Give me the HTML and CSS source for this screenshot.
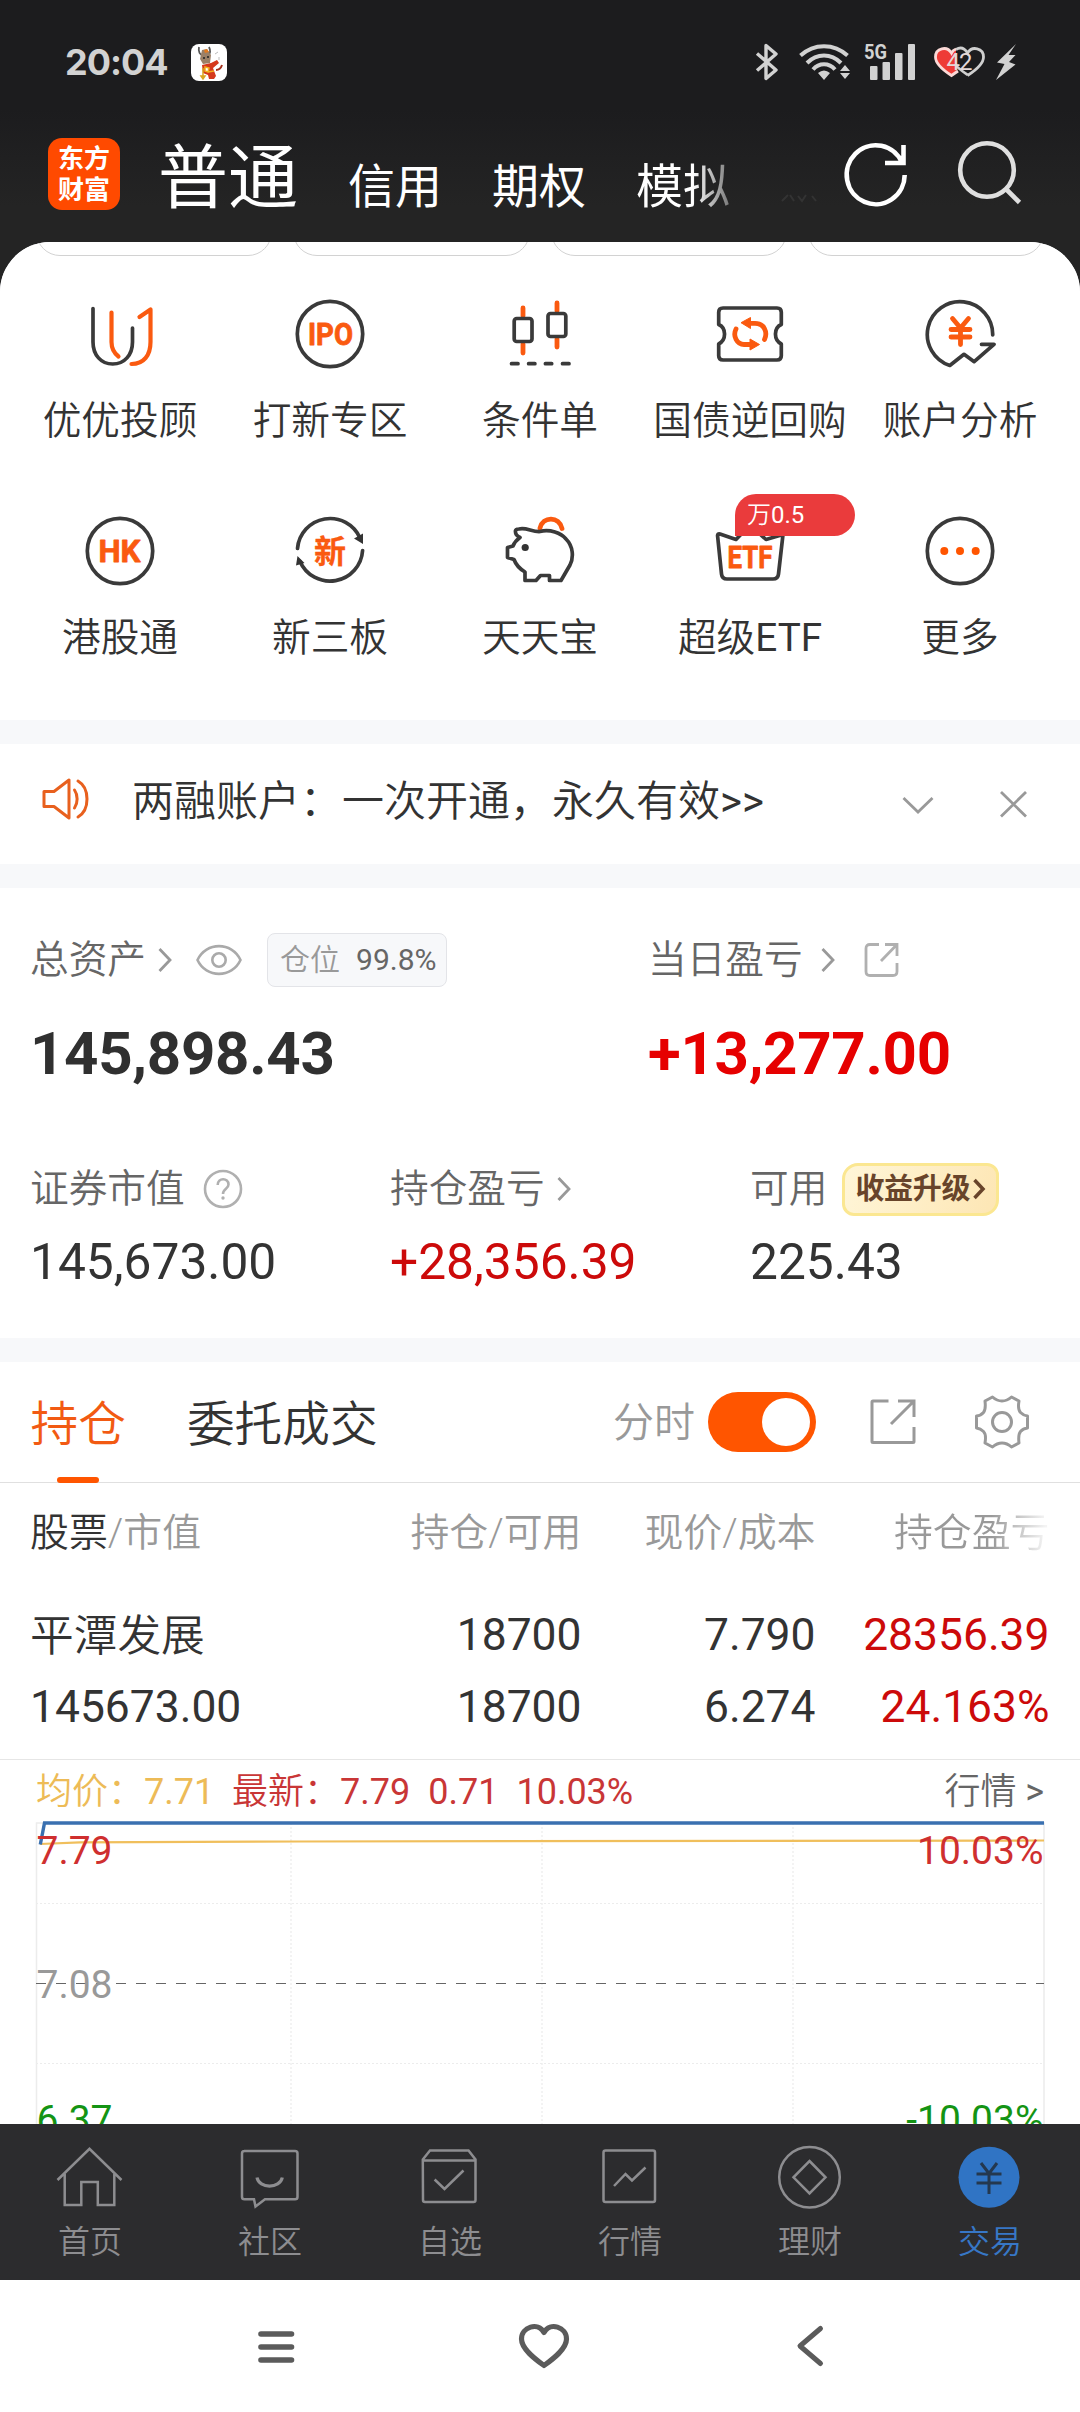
FILE: index.html
```html
<!DOCTYPE html>
<html lang="zh-CN">
<head>
<meta charset="utf-8">
<title>东方财富 - 交易</title>
<link rel="stylesheet" href="styles.css">
</head>
<body>
<div class="screen">
  <header class="top">
    <div class="status">
      <span class="clock">20:04</span>
      <svg class="app-dot" viewBox="0 0 36 37" width="36" height="37">
        <rect width="36" height="37" rx="8" fill="#fff"/>
        <path d="M8 3C7 8 9 11 12 11M18 3c2 4 1 7-1 9" stroke="#555" stroke-width="1.8" fill="none"/>
        <path d="M11 6l5-1 4 6-1 8-7 1-3-5z" fill="#9b8067"/>
        <path d="M13 6l3-1 2 3-4 1z" fill="#e37a1f"/>
        <path d="M12 14h2M16 13h2" stroke="#222" stroke-width="1.5"/>
        <path d="M11 21l9-2 6-3 2 3-6 5 3 8-2 3h-5l-1-4-5-2z" fill="#d5391c"/>
        <path d="M14 23l4 1-1 4-3-1zM17 28l6-1" fill="#fff" stroke="#f2b01e" stroke-width="1.5"/>
        <path d="M12 24v9M10 32l2 3 2-3z" stroke="#d9a520" fill="#d9a520" stroke-width="1.5"/>
        <path d="M25 26c3 0 5-2 6-5" stroke="#a5301b" stroke-width="2" fill="none"/>
        <path d="M24 10l3-2M28 13v3" stroke="#bbb" stroke-width="1"/>
      </svg>
      <div class="tray">
        <svg viewBox="755 43 24 38" width="24" height="38"><path d="M757 53.5L776 70 766 78.5V45.500L776 54 757 70.500" fill="none" stroke="#d2d2d2" stroke-width="3.4" stroke-linejoin="round"/></svg>
        <svg class="wifi" viewBox="798 42 54 40" width="54" height="40">
          <g fill="none" stroke="#d2d2d2" stroke-width="4"><path d="M800.500 55.500C814 43 834 43 847.500 55.500"/><path d="M807 63C817 53 831 53 841 63"/><path d="M813 69.500C819 62.500 829 62.500 835 69.500"/></g>
          <path d="M818 73q6-5 12 0l-6 7zM845 65l5 6h-10zM845 79l5-6h-10z" fill="#d2d2d2"/>
        </svg>
        <svg class="signal" viewBox="863 36 54 52" width="54" height="52"><g fill="#d2d2d2"><rect x="870" y="66" width="7.500" height="14" rx="1"/><rect x="882.500" y="62" width="7.500" height="18" rx="1"/><rect x="895" y="53" width="7.500" height="27" rx="1"/><rect x="908" y="44" width="7" height="36" rx="1"/><text x="864" y="58.500" class="net" textLength="23" lengthAdjust="spacingAndGlyphs">5G</text></g></svg>
        <svg class="hearts" viewBox="933 44 54 36" width="54" height="36">
          <path d="M951.500 75.500C946 72 935.500 65 935.500 57 935.500 48 947 45.500 951.500 53Q953 50 956 49V73z" fill="#ee3b36"/>
          <path d="M968 75C962 71 957 68 955 64" fill="none" stroke="#cfcfcf" stroke-width="2.600"/>
          <path d="M956 49.500C961 46.500 965 49 967.500 53 972 45.500 983.500 48 983.500 57 983.500 65 973 72 967.500 75.500" fill="none" stroke="#cfcfcf" stroke-width="2.800"/>
          <path d="M958 71l-6.500 4.500C946 72 935.500 65 935.500 57 935.500 48 947 45.500 951.500 53Q953 50 956 49" fill="none" stroke="#fbd9d7" stroke-width="2.800"/>
          <text x="946.500" y="70" class="battery">42</text>
        </svg>
        <svg class="bolt" viewBox="995 44 22 38" width="22" height="38"><path d="M1016 45L997 63.500 1004.500 65 996 81 1015.500 65.500 1009 63 1015.500 56 1008.500 56z" fill="#d2d2d2"/></svg>
      </div>
    </div>
    <nav class="accounts">
      <div class="logo">东方<br>财富</div>
      <div class="kinds">
        <span class="kind kind-on">普通</span>
        <span class="kind">信用</span>
        <span class="kind">期权</span>
        <span class="kind kind-fade">模拟</span>
        <svg class="ghost" viewBox="0 0 38 10" width="38" height="10"><path d="M1 8l6-6M9 2l4 6M17 3l4 5 4-6M31 3l4 5" stroke="#333" stroke-width="2" fill="none"/></svg>
      </div>
      <svg class="refresh" viewBox="842 141 68 68" width="68" height="68"><path d="M904.700 176A29 29.500 0 1 1 902.500 164.500M903.500 146V164H885" fill="none" stroke="#fff" stroke-width="4.600"/></svg>
      <svg class="search" viewBox="955 139 68 68" width="68" height="68"><g fill="none" stroke="#dfdfdf" stroke-width="4.600"><circle cx="987" cy="171" r="26.800"/><path d="M1006 190l13.500 13.500"/></g></svg>
    </nav>
  </header>

  <main class="sheet">
    <section class="menu">
      <div class="pills"><i></i><i></i><i></i><i></i></div>
      <div class="grid">
        <a class="tool"><svg class="ico" viewBox="0 0 72 72"><path class="dk" d="M9 10.500V44C9 57 17 66 28.700 66S48.500 57 48.500 44V30"/><path class="or" d="M27.500 14.500V44C27.500 51 30 55 34.500 58.500M55.500 19L66.500 11.500V44C66.500 57 60 66 47.500 66"/></svg><b>优优投顾</b></a>
        <a class="tool"><svg class="ico" viewBox="0 0 72 72"><circle class="dk" cx="36" cy="36" r="32.700"/><text class="ot" x="14" y="47" textLength="45" lengthAdjust="spacingAndGlyphs">IPO</text></svg><b>打新专区</b></a>
        <a class="tool"><svg class="ico" viewBox="0 0 72 72"><path class="or thick" d="M19 10V18M19 46V55M53 5V13M53 41V49"/><rect class="dk" x="10.200" y="20.500" width="17.800" height="23" rx="2.500"/><rect class="dk" x="44" y="15.500" width="17.800" height="23" rx="2.500"/><path class="dk" d="M7.500 65.700h6.500M24.600 65.700h6.300M41.400 65.700h6.300M58.500 65.700h6.500"/></svg><b>条件单</b></a>
        <a class="tool"><svg class="ico" viewBox="0 0 72 72"><path class="dk" d="M9 10H63Q67.300 10 67.300 14.300V26.500C59.500 30 59.500 42 67.300 46V57.700Q67.300 62 63 62H9Q4.700 62 4.700 57.700V46C12.500 42 12.500 30 4.700 26.500V14.300Q4.700 10 9 10Z"/><path class="or thick" d="M35 25.300H41C50 25.300 54 34 50.500 41.500M22 31C18.500 38 23 46.500 30 46.500H37"/><path class="of" d="M27 24.700L36.500 19.500V30.500ZM45.500 46.500L36 41V52Z"/></svg><b>国债逆回购</b></a>
        <a class="tool"><svg class="ico" viewBox="0 0 72 72"><path class="dk" d="M68.700 37A32.700 32.700 0 1 0 25.800 67.500L40 56.300 50.200 63.700 70 46.300H57.500"/><path class="or thick" d="M28.500 20.500L36.500 30 44.500 20.500M27 31.500H46M27 39H46M36.500 30V46.500"/></svg><b>账户分析</b></a>
        <a class="tool"><svg class="ico" viewBox="0 0 72 72"><circle class="dk" cx="36" cy="36" r="32.700"/><text class="ot" x="14.500" y="47" textLength="42" lengthAdjust="spacingAndGlyphs">HK</text></svg><b>港股通</b></a>
        <a class="tool"><svg class="ico" viewBox="0 0 72 72"><path class="dk" d="M3.500 33.500A32.700 32.700 0 0 1 66 23M68.600 35.500A32.700 32.700 0 0 1 6 46.500"/><path d="M60 23.500L69 18.500V29ZM3.500 41L2 50.500 10.500 48Z" fill="#333"/><text class="ot cn" x="20" y="48">新</text></svg><b>新三板</b></a>
        <a class="tool"><svg class="ico" viewBox="0 0 72 72"><path class="or thick" d="M36 13C39 1 55 1 58 13.500"/><path class="dk" d="M11.500 16Q11.500 14 15 14C22 12 28 17 36 16.500 46 14 57 18 62 24 69 31 70 42 66 50L57 65.500H45.500V60.500H36.500L32 65.500H21V57C16 54 12 50 10 44.500L3.500 42.500V32.500L9 31Q11 26 16 22.500Q11 20 11.500 16Z"/><circle cx="21.200" cy="32.500" r="3.600" fill="#333"/></svg><b>天天宝</b></a>
        <a class="tool"><svg class="ico" viewBox="0 0 72 72"><path class="dk" d="M22 24.500L6 19Q3.300 18.500 3.600 21L7.500 59Q8 64 13 64H59Q64 64 64.500 59L69 19.500 52 24.500 36 10Z"/><text class="ot" x="13.500" y="53" textLength="45" lengthAdjust="spacingAndGlyphs">ETF</text></svg><b>超级<i>ETF</i></b><em class="tag">万<i>0.5</i></em></a>
        <a class="tool"><svg class="ico" viewBox="0 0 72 72"><circle class="dk" cx="36" cy="36" r="32.700"/><g fill="#ff5500"><circle cx="20.300" cy="36" r="4"/><circle cx="36" cy="36" r="4"/><circle cx="51.700" cy="36" r="4"/></g></svg><b>更多</b></a>
      </div>
    </section>

    <section class="notice">
      <svg viewBox="41 777 50 44" width="50" height="44"><g fill="none" stroke="#e8601e" stroke-width="3" stroke-linejoin="round" stroke-linecap="round"><path d="M44 791.500H54L69 780V818L54 806.500H44ZM74.500 790C78 795 78 803 74.500 808M78 781C90 788 90 810 78 817"/></g></svg>
      <p>两融账户：一次开通，永久有效<i>&gt;&gt;</i></p>
      <svg viewBox="900 790 36 26" width="36" height="26"><path d="M903.500 797L918 811 932.500 797" class="gl"/></svg>
      <svg class="close" viewBox="998 788 31 32" width="31" height="32"><path d="M1001 792L1026 816.500M1026 792L1001 816.500" class="gl"/></svg>
    </section>

    <section class="assets">
      <div class="duo">
        <div class="cell">
          <div class="lab">总资产<svg class="chev" viewBox="0 0 16 26" width="16" height="26"><path d="M2.500 2L13 13 2.500 24" class="gl"/></svg>
            <svg class="eye" viewBox="0 0 46 32" width="46" height="32"><g fill="none" stroke="#aaa" stroke-width="2.600"><path d="M1.500 16C10-2.500 36-2.500 44.500 16 36 34.500 10 34.500 1.500 16Z"/><circle cx="23" cy="16" r="6.700"/></g></svg>
            <span class="ratio">仓位<i>99.8%</i></span></div>
          <div class="big">145,898.43</div>
        </div>
        <div class="cell">
          <div class="lab">当日盈亏<svg class="chev wide" viewBox="0 0 16 26" width="16" height="26"><path d="M2.500 2L13 13 2.500 24" class="gl"/></svg>
            <svg class="share" viewBox="0 0 36 36" width="36" height="36"><path d="M15 2.500H6Q2 2.500 2 6.500V29.500Q2 33.500 6 33.500H29Q33 33.500 33 29.500V21M21 2.500H33V14M32 3.500L17 19" fill="none" stroke="#b0b0b0" stroke-width="2.800"/></svg></div>
          <div class="big up">+13,277.00</div>
        </div>
      </div>
      <div class="trio">
        <div class="cell"><div class="lab">证券市值<svg class="help" viewBox="0 0 40 40" width="40" height="40"><circle cx="20" cy="20" r="18" fill="none" stroke="#b0b0b0" stroke-width="2.600"/><path d="M14.700 16C14.700 8.500 25.500 8.500 25.500 15.500 25.500 20 20 19.500 20 25" fill="none" stroke="#b0b0b0" stroke-width="2.600"/><circle cx="20" cy="29" r="1.700" fill="#b0b0b0"/></svg></div><div class="mid">145,673.00</div></div>
        <div class="cell"><div class="lab">持仓盈亏<svg class="chev" viewBox="0 0 16 26" width="16" height="26"><path d="M2.500 2L13 13 2.500 24" class="gl"/></svg></div><div class="mid up2">+28,356.39</div></div>
        <div class="cell"><div class="lab">可用<span class="gold">收益升级<svg viewBox="0 0 14 22" width="14" height="22"><path d="M2.500 2L11 11 2.500 20" fill="none" stroke="#68442a" stroke-width="3.500"/></svg></span></div><div class="mid">225.43</div></div>
      </div>
    </section>

    <section class="positions">
      <div class="tabs">
        <span class="tab on">持仓</span>
        <span class="tab">委托成交</span>
        <span class="switch-lab">分时</span>
        <span class="switch"><i></i></span>
        <svg class="export" viewBox="0 0 48 48" width="48" height="48"><path d="M19.500 3H4Q3 3 3 4V43.500Q3 44.500 4 44.500H44Q45 44.500 45 43.500V29M29 3H45V19M44.500 3.500L22 26" fill="none" stroke="#999" stroke-width="3"/></svg>
        <svg class="gear" viewBox="-28 -28 56 56" width="56" height="56"><g fill="none" stroke="#999" stroke-width="3"><circle r="9.500"/><path stroke-linejoin="round" d="M-9.500-25Q-5-21 0-21T9.500-25L17-21Q15.500-12.500 18.500-9.500T25.500-6V6Q21 6.500 18.500 9.500T17 21L9.500 25Q5 21 0 21T-9.500 25L-17 21Q-15.500 12.500-18.500 9.500T-25.500 6V-6Q-21-6.500-18.500-9.500T-17-21Z"/></g></svg>
      </div>
      <div class="row head"><span><i>股票</i>/市值</span><span>持仓/可用</span><span>现价/成本</span><span class="cut">持仓盈亏</span></div>
      <div class="row first"><span class="name">平潭发展</span><span>18700</span><span>7.790</span><span class="up2">28356.39</span></div>
      <div class="row"><span>145673.00</span><span>18700</span><span>6.274</span><span class="up2">24.163%</span></div>
      <div class="quote">
        <div class="legend"><span class="avg">均价：<i>7.71</i></span><span class="last">最新：<i>7.79</i></span><span class="last"><i>0.71</i></span><span class="last"><i>10.03%</i></span><span class="more">行情 <i>&gt;</i></span></div>
        <svg class="chart" viewBox="0 1816 1080 308" width="1080" height="308">
          <g fill="none" stroke="#ececec" stroke-width="1.500"><path d="M36.500 2124V1823H1044V2124"/><g stroke-dasharray="2 2" stroke-width="1.200"><path d="M36 1903.500H1044M36 2063.500H1044M291 1823V2124M542 1823V2124M793 1823V2124"/></g></g>
          <path d="M36 1983.500H1044" stroke="#666" stroke-width="1" stroke-dasharray="10 10"/>
          <path d="M40 1844L80 1842.300 300 1841.500 1044 1840.500" fill="none" stroke="#f0bf5c" stroke-width="2.200"/>
          <path d="M40.300 1844.500L44.500 1823H1044" fill="none" stroke="#3a70b0" stroke-width="3.400"/>
          <g class="axis">
            <text x="36.500" y="1864.300" fill="#cf2f2f">7.79</text><text x="36.500" y="1998" fill="#999">7.08</text><text x="36.500" y="2132.500" fill="#149414">6.37</text>
            <g text-anchor="end"><text x="1043.500" y="1864.300" fill="#cf2f2f">10.03%</text><text x="1043.500" y="2132.500" fill="#149414">-10.03%</text></g>
          </g>
        </svg>
      </div>
    </section>
  </main>

  <nav class="bottom">
    <a><svg viewBox="0 0 72 72"><path d="M3.500 39L35.500 7.800 67.500 39M10.700 33V64H27.300V41H43.800V64H60.300V33"/></svg>首页</a>
    <a><svg viewBox="0 0 72 72"><path d="M10 10H61Q63.500 10 63.500 12.500V56Q63.500 58.300 61 58.300H31L21.500 65.500 20 58.300H10.500Q8 58.300 8 56V12.500Q8 10 10.500 10Z"/><path stroke-width="3.200" d="M23 36.500C25 48 46 48 48.300 36.500"/></svg>社区</a>
    <a><svg viewBox="0 0 72 72"><path d="M8.800 18.500L16 9.500H54.500L61.500 18.500V59Q61.500 61 59.500 61H11Q9 61 9 59ZM9 19.500H61.500M20.600 38.500L30.500 48 49.500 29.500"/></svg>自选</a>
    <a><svg viewBox="0 0 72 72"><path d="M11.500 9.500H59Q61 9.500 61 11.500V59Q61 61 59 61H11.500Q9.500 61 9.500 59V11.500Q9.500 9.500 11.500 9.500ZM20 45L31.500 33 38 39.500 51.500 26.500"/></svg>行情</a>
    <a><svg viewBox="0 0 72 72"><circle cx="35.500" cy="36.300" r="30.300"/><path d="M35.500 20L51.500 36.300 35.500 52.500 19.500 36.300Z"/></svg>理财</a>
    <a class="now"><svg viewBox="0 0 72 72"><circle cx="35" cy="36.300" r="30.500" fill="#3074c4" stroke="none"/><path class="yen" d="M27 22L35 32.500 43 22M22.500 33H47.500M22.500 42H47.500M35 32.500V53"/></svg>交易</a>
  </nav>
  <div class="sysbar">
    <svg viewBox="256 2320 40 50" width="40" height="50"><path d="M261 2333H291.500M261 2346H291.500M261 2359H291.500" stroke="#5b5b5b" stroke-width="5.600" stroke-linecap="round"/></svg>
    <svg viewBox="516 2320 56 52" width="56" height="52"><path d="M544 2365.500C535 2359 521.500 2349 521.500 2339 521.500 2327 538 2321.500 544 2332.500 550 2321.500 566.500 2327 566.500 2339 566.500 2349 553 2359 544 2365.500Z" fill="none" stroke="#5b5b5b" stroke-width="5.200" stroke-linejoin="round"/></svg>
    <svg viewBox="792 2320 36 52" width="36" height="52"><path d="M820.500 2328.500L800 2346 820.500 2363.500" fill="none" stroke="#5b5b5b" stroke-width="5" stroke-linecap="round" stroke-linejoin="round"/></svg>
  </div>
</div>
</body>
</html>
```
FILE: styles.css
```css
* { box-sizing: border-box; }
body { margin: 0; background: #fff; font-family: Roboto, "Noto Sans CJK SC", sans-serif; color: #333; }
i, em { font-style: normal; }
svg { display: block; flex: none; }
.screen { width: 1080px; height: 2412px; overflow: hidden; display: flex; flex-direction: column; background: #242424; }

/* header */
.top { height: 242px; flex: none; background: linear-gradient(#1c1c1e 45%, #242424 85%); color: #fff; }
.status { height: 124px; display: flex; align-items: center; padding: 0 63px 0 65px; }
.clock { font: 700 36px/40px Inter, sans-serif; color: #d2d2d2; width: 126px; letter-spacing: -1px; }
.tray { display: flex; align-items: center; margin-left: auto; }
.wifi { margin-left: 19px; }
.signal { margin-left: 11px; }
.hearts { margin-left: 16px; }
.bolt { margin-left: 8px; }
.net { font: 700 21px Roboto, sans-serif; }
.battery { font: 400 24px Roboto, sans-serif; fill: #e4d8d8; letter-spacing: -1px; }
.accounts { height: 100px; display: flex; align-items: center; padding: 0 57px 0 48px; }
.logo { width: 72px; height: 72px; border-radius: 14px; background: #ff4a00; font-size: 26px; line-height: 31px; font-weight: 700; text-align: center; padding-top: 6px; }
.kinds { display: flex; align-items: baseline; padding: 17px 0 0 38px; width: 722px; white-space: nowrap; }
.kind { font-size: 47px; line-height: 70px; font-weight: 400; margin-left: 50px; }
.kind-on { font-size: 70px; margin-left: 0; }
.kind-fade { background: linear-gradient(90deg, #fff 60%, #777 100%); -webkit-background-clip: text; background-clip: text; color: transparent; }
.ghost { margin-left: 51px; }
.search { margin-left: 45px; margin-top: -4px; }

/* sheet */
.sheet { height: 1882px; flex: none; background: #f7f8fa; border-radius: 50px 50px 0 0; overflow: hidden; display: flex; flex-direction: column; gap: 24px; }
.sheet > section { background: #fff; flex: none; }
.menu { height: 478px; }
.pills { display: flex; gap: 21px; height: 14px; padding: 0 36px; overflow: hidden; align-items: flex-end; }
.pills i { flex: 1; height: 60px; border: 1.500px solid #d2d2d2; border-radius: 24px; }
.grid { display: grid; grid-template-columns: repeat(5, 210px); grid-auto-rows: 217px; padding: 42px 15px 0; }
.tool { position: relative; display: flex; flex-direction: column; align-items: center; gap: 21px; }
.tool b { font-size: 38.700px; font-weight: 350; line-height: 60px; white-space: nowrap; }
.tool i, .notice i, .legend i { font-weight: 400; }
.ico { width: 72px; height: 72px; }
.dk { fill: none; stroke: #3a3a3a; stroke-width: 3.700; stroke-linecap: round; stroke-linejoin: round; }
.or { fill: none; stroke: #fa5a10; stroke-width: 4.200; stroke-linecap: round; stroke-linejoin: round; }
.thick { stroke-width: 4.800; }
.of { fill: #fa5a10; stroke: #fa5a10; stroke-linejoin: round; }
.ot { font: 700 31px Roboto, sans-serif; fill: #fa5a10; stroke: #fa5a10; stroke-width: 0.800; stroke-linejoin: round; }
.cn { font: 700 32px "Noto Sans CJK SC", sans-serif; stroke-width: 0.300; }
.tag { position: absolute; z-index: 1; left: 90px; top: -21px; width: 120px; height: 42px; padding-left: 12px; background: #ea3b3c; color: #fff; border-radius: 21px 21px 21px 0; font-size: 24px; line-height: 43px; font-weight: 350; }

.gl { fill: none; stroke: #999; stroke-width: 2.800; }
.notice { height: 120px; display: flex; align-items: center; padding: 0 51px 10px 41px; }
.notice p { margin: 6px 0 0 41px; flex: 1; font-size: 42px; line-height: 60px; font-weight: 350; white-space: nowrap; }
.close { margin-left: 62px; }
.notice svg + p ~ svg { margin-top: 10px; }

.assets { height: 450px; padding: 42px 30px 0; }
.duo { display: grid; grid-template-columns: 618px 1fr; height: 229px; }
.trio { display: grid; grid-template-columns: 360px 360px 1fr; }
.lab { display: flex; align-items: center; height: 60px; font-size: 38.700px; line-height: 60px; font-weight: 350; color: #666; white-space: nowrap; }
.chev { margin-left: 11px; }
.wide { margin-left: 17px; }
.eye { margin-left: 23px; }
.share { margin-left: 28px; }
.help { margin-left: 18px; }
.ratio { display: flex; align-items: center; margin-left: 25px; width: 180px; height: 54px; padding-left: 12px; border: 1.500px solid #e3e4e8; border-radius: 8px; background: #f7f8fa; font-size: 30px; line-height: 52px; color: #999; }
.ratio i { margin-left: 16px; color: #666; font-weight: 400; }
.big { font-size: 60px; line-height: 70px; font-weight: 700; margin-top: 29px; letter-spacing: -0.300px; color: #303030; }
.up { color: #e60000; }
.mid { font-size: 49.700px; line-height: 60px; margin-top: 13px; }
.up2 { color: #cc0a0a; }
.gold { display: flex; align-items: center; width: 157px; height: 53px; margin-left: 15px; padding-left: 10px; gap: 2px; font-size: 29px; line-height: 46px; font-weight: 700; letter-spacing: -0.300px; color: #68442a; border: 3px solid #fbe791; border-radius: 16px 12px 16px 12px; background: linear-gradient(110deg, #fff6d8, #fde6b4); }

.positions { height: 762px; }
.tabs { height: 121px; display: flex; align-items: center; padding: 0 50px 0 30.500px; border-bottom: 1.500px solid #e0e0e0; }
.tab { position: relative; font-size: 47.700px; line-height: 121px; font-weight: 350; margin-right: 61px; white-space: nowrap; padding-top: 3px; height: 121px; }
.on { color: #f25a12; }
.on::after { content: ""; position: absolute; left: 26px; bottom: 0; width: 42px; height: 6px; border-radius: 3px; background: #ff5500; }
.switch-lab { margin-left: auto; padding-top: 2px; font-size: 41px; line-height: 60px; font-weight: 350; color: #999; }
.switch { width: 108px; height: 60px; margin-left: 13px; border-radius: 30px; background: #ff5500; padding: 6px 6px 6px 54px; }
.switch i { display: block; width: 48px; height: 48px; border-radius: 50%; background: #fff; }
.export { margin-left: 53px; }
.gear { margin-left: 57px; }
.row { display: grid; grid-template-columns: 317.500px 234px 234px 234px; padding: 0 30px; height: 72px; line-height: 72px; font-size: 44.400px; text-align: right; white-space: nowrap; }
.row span:first-child { text-align: left; }
.head { height: 98px; line-height: 100px; font-size: 38.900px; color: #999; font-weight: 350; }
.head i { color: #333; }
.cut { background: linear-gradient(90deg, #999 75%, #f4f4f4 98%); -webkit-background-clip: text; background-clip: text; color: transparent; }
.first { height: 90px; padding-top: 18px; }
.row .name { font-weight: 350; font-size: 43.700px; padding-top: 1px; }
.quote { margin-top: 16px; border-top: 1px solid #e6e6e6; }
.legend { display: flex; height: 56px; padding: 8px 36px 0; align-items: center; font-size: 36px; line-height: 56px; white-space: nowrap; font-weight: 350; }
.avg { color: #edbb57; width: 196px; }
.last { color: #c93636; margin-right: 18px; }
.more { margin-left: auto; color: #666; }
.axis { font: 400 39px Roboto, sans-serif; }

/* bottom navigation */
.bottom { height: 156px; flex: none; display: flex; background: #2c2c2e; color: #8d8d90; font-size: 32px; font-weight: 350; }
.bottom a { flex: 1; display: flex; flex-direction: column; align-items: center; padding-top: 17px; line-height: 58px; }
.bottom svg { width: 72px; height: 72px; fill: none; stroke: #8d8d90; stroke-width: 2.500; }
.bottom .now { color: #3777c6; }
.bottom .yen { stroke: #24384f; stroke-width: 3; }
.sysbar { height: 132px; flex: none; background: #fff; display: flex; align-items: center; padding-left: 256px; }
.sysbar svg + svg { margin-left: 220px; }
```
